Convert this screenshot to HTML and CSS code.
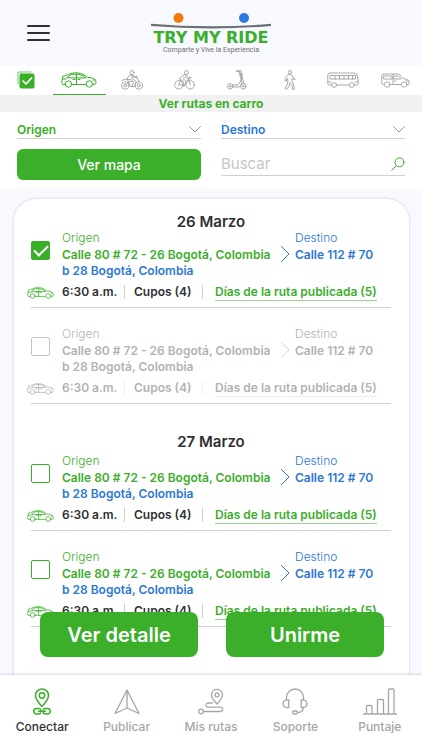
FILE: index.html
```html
<!DOCTYPE html>
<html lang="es">
<head>
<meta charset="utf-8">
<meta name="viewport" content="width=device-width, initial-scale=1">
<title>Try My Ride</title>
<link rel="stylesheet" href="styles.css">
</head>
<body>
<svg class="sprite" aria-hidden="true">
  <symbol id="car" viewBox="0 0 36 16">
    <path d="M4 12.5H1.5Q.8 12 .9 10.500V8.500Q1 7 2 6L1.300 4.500Q5 3.500 7.500 2.300Q10.500 .8 15 .8Q20 .8 23 2.800L26.500 5.300Q31 5.500 33.500 7Q35 8 35 10.500Q35 12.300 33.500 12.500H32M11 12.500H24.500M6 5.500Q8 3 11 2.400Q18 1.300 22 3.700L24.500 5.700ZM15.500 2V12.500M1.500 7H5M12 7.500H14M17 7.500H19M32 8H34"/>
    <circle cx="7.500" cy="12" r="3.200"/><circle cx="28.300" cy="12" r="3.200"/>
  </symbol>
</svg>
<div class="app">
  <header class="header">
    <button class="menu" aria-label="Menú"><span></span><span></span><span></span></button>
    <div class="logo">
      <svg class="logo-mark" viewBox="0 0 120 17" aria-hidden="true">
        <circle cx="27.500" cy="5" r="5" fill="#f07a08"/><circle cx="93" cy="5" r="5" fill="#2c7be0"/>
        <path d="M0 10.800Q60 15.800 120 10.800V13Q60 17.800 0 13Z" fill="#6d6e72"/>
      </svg>
      <strong class="logo-name">TRY MY RIDE</strong>
      <span class="logo-tag">Comparte y Vive la Experiencia</span>
    </div>
  </header>

  <nav class="modes" aria-label="Medio de transporte">
    <button class="mode mode-on" aria-label="Todos"><svg width="18" height="18" viewBox="0 0 18 18"><path d="M1 13V1H14" stroke-width=".7"/><rect x="3" y="3" width="14" height="14" rx="1" fill="#3bae2a"/><path d="M6 10L9 13L14.500 7" stroke="#fff" stroke-width="1.700"/></svg></button>
    <button class="mode mode-on mode-current" aria-label="Carro"><svg width="36" height="16"><use href="#car"/></svg></button>
    <button class="mode" aria-label="Moto"><svg width="22" height="20" viewBox="0 0 22 20"><circle cx="4.200" cy="15.500" r="3.700"/><circle cx="4.200" cy="15.500" r="1.500"/><circle cx="17.800" cy="15.500" r="3.700"/><circle cx="17.800" cy="15.500" r="1.500"/><circle cx="11" cy="2.500" r="2"/><path d="M9 5Q6.500 6.500 6 9.500H10L12.500 12L10.500 16.500H13.500L15 11.500L11 8.500V6.500L15.500 8M9 5L12 5.500L16 7M15.500 6L18 12M1 10.500L5 9L8 11.500H11M4 15L8 12L9 16.500H13"/></svg></button>
    <button class="mode" aria-label="Bicicleta"><svg width="21" height="20" viewBox="0 0 21 20"><circle cx="4.800" cy="14.800" r="4.200"/><circle cx="16.200" cy="14.800" r="4.200"/><circle cx="12.500" cy="2.500" r="2"/><path d="M10.500 4.500Q7 6 5.500 9L9.500 11.500L8.500 16H10.500L12 11L9 8.500L11.500 6.500L13.500 9H16.500M10.500 4.500L13 5.500L14.500 7.500H17M4.800 14.800L7 10M9.500 16L14.500 9.500M16.200 14.800L14 8.500M5 15H10"/></svg></button>
    <button class="mode" aria-label="Patineta"><svg width="20" height="20" viewBox="0 0 20 20"><circle cx="3.200" cy="16.300" r="2.700"/><circle cx="3.200" cy="16.300" r=".8"/><circle cx="16.300" cy="16.300" r="2.700"/><circle cx="16.300" cy="16.300" r=".8"/><path d="M5.500 15H10Q12.500 14 13.500 11.500L14 9L12.500 1.500H9.500V.7H14L16 10.500L17 13.500M6 17H12Q14 16 15 12.500L13.800 4M12 3.500H15V5.500H12.500"/></svg></button>
    <button class="mode" aria-label="A pie"><svg width="12" height="20" viewBox="0 0 12 20"><circle cx="6" cy="2.200" r="1.700"/><path d="M4.500 4.500Q2 6 1.300 8.500L1 11H2.200L3.500 8L3.800 11.500L3 15L1 18.500L2.800 19.300L5 16L6 12.500L8 15.500L8.500 19.300H10.200L9.800 15L8 11V8L10.500 9.800L11.300 9L8.500 6.500Q8 4.500 6.500 4.500Z"/></svg></button>
    <button class="mode" aria-label="Bus"><svg width="32" height="16" viewBox="0 0 32 16"><path d="M4.500 13H2Q.8 13 .8 11.500V3Q.8 1 3 1H27Q30 1 30.500 4L31.200 9V11.500Q31.200 13 30 13H27.500M10 13H22M3.500 3.500H28.500V7H3.500ZM8 3.500V7M12.500 3.500V7M17 3.500V7M21.500 3.500V7M25.500 3.500V7M1 10H4M28 10H31"/><circle cx="7.200" cy="13" r="2.400"/><circle cx="24.800" cy="13" r="2.400"/></svg></button>
    <button class="mode" aria-label="Camioneta"><svg width="29" height="15" viewBox="0 0 29 15"><path d="M3.500 11.500H2Q.8 11.500 .8 10V3Q.8 1 3 1H16Q18 1 19.500 2.500L22 5.500Q26.500 6 27.500 7.500Q28.200 8.500 28.200 10.500Q28.200 11.500 27 11.500H26M9 11.500H20.500M3 3H11V6H3ZM13 3H16Q17.500 3 18.500 4L20 6H13ZM12 1V11.500M13.500 8H15M25 8H27.500"/><circle cx="6.200" cy="11.500" r="2.700"/><circle cx="23.200" cy="11.500" r="2.700"/></svg></button>
  </nav>
  <h1 class="banner">Ver rutas en carro</h1>

  <form class="filters">
    <div class="field">
      <select class="pick pick-from" aria-label="Origen"><option>Origen</option></select>
      <svg class="pick-arrow" width="12" height="7" viewBox="0 0 12 7"><path d="M.5 .5L6 6L11.500 .5"/></svg>
    </div>
    <div class="field">
      <select class="pick pick-to" aria-label="Destino"><option>Destino</option></select>
      <svg class="pick-arrow" width="12" height="7" viewBox="0 0 12 7"><path d="M.5 .5L6 6L11.500 .5"/></svg>
    </div>
    <button class="btn map-btn" type="button">Ver mapa</button>
    <div class="field search">
      <input type="search" placeholder="Buscar" aria-label="Buscar">
      <button class="search-btn" type="button" aria-label="Buscar"><svg width="14" height="14" viewBox="0 0 14 14"><circle cx="8.500" cy="5.300" r="4.500"/><path d="M5.200 8.700L.8 13.200"/></svg></button>
    </div>
  </form>

  <main class="content">
    <div class="card">
      <section class="day">
        <h2 class="day-title">26 Marzo</h2>
        <article class="route">
          <input class="check" type="checkbox" aria-label="Elegir ruta 1" checked>
          <span class="label from">Origen</span><span class="label to">Destino</span>
          <span class="addr from">Calle 80 # 72 - 26 Bogotá, Colombia</span>
          <svg class="chev" width="9" height="16" viewBox="0 0 9 16"><path d="M.5 .5L8 8L.5 15.500"/></svg>
          <span class="addr to">Calle 112 # 70</span>
          <span class="rest to">b 28 Bogotá, Colombia</span>
          <svg class="mini-car" width="27" height="12"><use href="#car"/></svg>
          <div class="meta"><span class="time">6:30 a.m.</span><span class="seats">Cupos (4)</span><a href="#dias">Días de la ruta publicada (5)</a></div>
        </article>
        <article class="route route-off">
          <input class="check" type="checkbox" aria-label="Elegir ruta 2">
          <span class="label from">Origen</span><span class="label to">Destino</span>
          <span class="addr from">Calle 80 # 72 - 26 Bogotá, Colombia</span>
          <svg class="chev" width="9" height="16" viewBox="0 0 9 16"><path d="M.5 .5L8 8L.5 15.500"/></svg>
          <span class="addr to">Calle 112 # 70</span>
          <span class="rest to">b 28 Bogotá, Colombia</span>
          <svg class="mini-car" width="27" height="12"><use href="#car"/></svg>
          <div class="meta"><span class="time">6:30 a.m.</span><span class="seats">Cupos (4)</span><a href="#dias">Días de la ruta publicada (5)</a></div>
        </article>
      </section>
      <section class="day">
        <h2 class="day-title">27 Marzo</h2>
        <article class="route">
          <input class="check" type="checkbox" aria-label="Elegir ruta 3">
          <span class="label from">Origen</span><span class="label to">Destino</span>
          <span class="addr from">Calle 80 # 72 - 26 Bogotá, Colombia</span>
          <svg class="chev" width="9" height="16" viewBox="0 0 9 16"><path d="M.5 .5L8 8L.5 15.500"/></svg>
          <span class="addr to">Calle 112 # 70</span>
          <span class="rest to">b 28 Bogotá, Colombia</span>
          <svg class="mini-car" width="27" height="12"><use href="#car"/></svg>
          <div class="meta"><span class="time">6:30 a.m.</span><span class="seats">Cupos (4)</span><a href="#dias">Días de la ruta publicada (5)</a></div>
        </article>
        <article class="route">
          <input class="check" type="checkbox" aria-label="Elegir ruta 4">
          <span class="label from">Origen</span><span class="label to">Destino</span>
          <span class="addr from">Calle 80 # 72 - 26 Bogotá, Colombia</span>
          <svg class="chev" width="9" height="16" viewBox="0 0 9 16"><path d="M.5 .5L8 8L.5 15.500"/></svg>
          <span class="addr to">Calle 112 # 70</span>
          <span class="rest to">b 28 Bogotá, Colombia</span>
          <svg class="mini-car" width="27" height="12"><use href="#car"/></svg>
          <div class="meta"><span class="time">6:30 a.m.</span><span class="seats">Cupos (4)</span><a href="#dias">Días de la ruta publicada (5)</a></div>
        </article>
      </section>
    </div>
    <div class="actions">
      <button class="btn">Ver detalle</button>
      <button class="btn">Unirme</button>
    </div>
  </main>

  <nav class="tabs" aria-label="Principal">
    <a class="tab tab-current" href="#conectar"><svg width="18" height="27" viewBox="0 0 18 27"><path d="M9 18.500Q2.500 11.500 2.500 7.500A6.500 6.500 0 0 1 15.500 7.500Q15.500 11.500 9 18.500Z"/><circle cx="9" cy="7.500" r="2.700"/><path d="M8 22.500Q7.500 20.500 5.500 20.500H3.500A2.700 2.700 0 0 0 3.500 26H5.500Q7 26 7.800 25M10 24Q10.500 26 12.500 26H14.500A2.700 2.700 0 0 0 14.500 20.500H12.500Q11 20.500 10.200 21.500M5.500 23.300H12.500"/></svg>Conectar</a>
    <a class="tab" href="#publicar"><svg width="26" height="27" viewBox="0 0 26 27"><path d="M13 2L25 25.500L13 20L1 25.500ZM13 2V20"/></svg>Publicar</a>
    <a class="tab" href="#rutas"><svg width="26" height="27" viewBox="0 0 26 27"><path d="M19 16Q13.500 10.500 13.500 6.800A5.500 5.500 0 0 1 24.500 6.800Q24.500 10.500 19 16Z"/><circle cx="19" cy="6.800" r="2"/><circle cx="3" cy="23.500" r="2.300"/><path d="M5.500 23.500H23A2.200 2.200 0 0 0 23 19.200H9.500A2.200 2.200 0 0 1 9.500 15H14.500"/></svg>Mis rutas</a>
    <a class="tab" href="#soporte"><svg width="26" height="27" viewBox="0 0 26 27"><path d="M4.500 11V9.500A8.500 8.500 0 0 1 21.500 9.500V11M6.800 12V19.500Q1 20 1 15.700Q1 11.500 6.800 12ZM19.200 12V19.500Q25 20 25 15.700Q25 11.500 19.200 12ZM21.500 19.500Q21 24.500 15.500 24.500"/><rect x="10.500" y="23" width="5" height="3" rx="1.500"/></svg>Soporte</a>
    <a class="tab" href="#puntaje"><svg width="34" height="27" viewBox="0 0 34 27"><path d="M.5 26H33.500M3.500 26V18.500Q3.500 17.500 4.500 17.500H8Q9 17.500 9 18.500V26M14.500 26V12.500Q14.500 11.500 15.500 11.500H19.500Q20.500 11.500 20.500 12.500V26M25.500 26V2Q25.500 1 26.500 1H30Q31 1 31 2V26"/></svg>Puntaje</a>
  </nav>
</div>
</body>
</html>
```
FILE: styles.css
```css
:root {
  --green: #3bae2a;
  --blue: #2c78d4;
  --ink: #2f2f33;
  --muted: #b2b2b4;
  --line: #cfcfd2;
  --wash: #f8f9ff;
}
* { box-sizing: border-box; }
body {
  margin: 0;
  font-family: Inter, "Liberation Sans", sans-serif;
  color: var(--ink);
  background: var(--wash);
}
button, input, select { margin: 0; padding: 0; border: 0; border-radius: 0; background: none; font: inherit; color: inherit; }
svg { fill: none; stroke: currentColor; stroke-linejoin: round; stroke-linecap: round; }
.sprite { position: absolute; width: 0; height: 0; }
.app { display: flex; flex-direction: column; height: 100vh; }

.header {
  display: grid;
  grid-template-columns: 1fr auto 1fr;
  align-items: center;
  height: 66px;
  padding: 0 27px;
  flex: none;
}
.menu { display: flex; flex-direction: column; gap: 5px; width: 23px; }
.menu span { height: 2px; border-radius: 1px; background: var(--ink); }
.logo { display: flex; flex-direction: column; align-items: center; }
.logo-mark { width: 120px; height: 17px; stroke: none; }
.logo-name { font: bold 16px/16px "DejaVu Sans", sans-serif; color: var(--green); }
.logo-tag { font: 7px/8px Roboto, sans-serif; color: #6d6e72; }

.modes { display: grid; grid-template-columns: repeat(8, 1fr); height: 29px; background: #fff; flex: none; }
.mode { display: flex; align-items: center; justify-content: center; color: #a9a9a9; border-bottom: 1px solid transparent; }
.mode-on { color: var(--green); }
.mode-current { border-color: var(--green); }
.banner { margin: 0; background: #f1f1f1; color: var(--green); font-size: 12px; line-height: 17px; font-weight: 700; text-align: center; flex: none; }

.filters {
  display: grid;
  grid-template-columns: repeat(2, minmax(0, 1fr));
  gap: 10px 20px;
  padding: 8px 17px 9px;
  background: #fff;
  flex: none;
}
.field { position: relative; display: flex; border-bottom: 1px solid var(--line); }
.pick { appearance: none; width: 100%; height: 18px; font-size: 12px; font-weight: 600; }
.pick-from { color: var(--green); }
.pick-to { color: var(--blue); }
.pick-arrow { position: absolute; right: 0; top: 6px; color: #999; pointer-events: none; }
.btn { background: var(--green); color: #fff; border-radius: 6px; font-weight: 500; }
.map-btn { height: 31px; font-size: 14px; }
.search { align-self: start; height: 27px; align-items: center; padding-top: 3px; }
.search input { flex: 1; min-width: 0; font-size: 15px; outline: none; }
.search input::placeholder { color: #c6c6c8; opacity: 1; }
.search-btn { display: flex; color: var(--green); }

.content { position: relative; flex: 1; min-height: 0; overflow: hidden; padding: 10px 13px 0 14px; }
.card {
  height: 100%;
  min-height: 500px;
  padding: 16px 18px 80px 17px;
  background: #fff;
  border-radius: 22px 22px 0 0;
  box-shadow: 0 0 3px rgba(60, 60, 100, .25);
}
.day-title { margin: 0; font-size: 15px; line-height: 14px; font-weight: 600; text-align: center; }
.day + .day { padding-top: 31px; }
.day + .day .day-title { margin-bottom: 3px; }
.route {
  display: grid;
  grid-template-columns: 31px 219px 14px 1fr;
  grid-template-rows: 17px 16px 17px 28px;
  padding-top: 17px;
  border-bottom: 1px solid var(--line);
  font-size: 12px;
  line-height: 17px;
  font-weight: 600;
  white-space: nowrap;
}
.day-title + .route { padding-top: 0; }
.check {
  appearance: none;
  grid-area: 1 / 1 / 4 / 2;
  width: 19px;
  height: 19px;
  margin-top: 12px;
  border: 1px solid var(--green);
  border-radius: 2px;
}
.check:checked {
  display: flex;
  align-items: center;
  justify-content: center;
  background: var(--green);
}
.check:checked::after {
  content: "";
  width: 12px;
  height: 6px;
  margin-bottom: 4px;
  border: solid #fff;
  border-width: 0 0 2px 2px;
  transform: rotate(-45deg);
}
.from { color: var(--green); }
.to { color: var(--blue); }
.label { font-weight: 300; grid-row: 1; }
.addr { grid-row: 2; }
.label.from, .addr.from { grid-column: 2; }
.label.to, .addr.to { grid-column: 4; }
.chev { grid-area: 2 / 3; color: var(--blue); }
.rest { grid-area: 3 / 2 / 4 / 5; }
.mini-car { grid-area: 4 / 1; margin: 8px 0 0 -4px; color: var(--green); }
.meta { grid-area: 4 / 2 / 5 / 5; display: flex; align-items: flex-start; padding-top: 5px; }
.meta span { border-right: 1px solid var(--line); line-height: 14px; margin: 1px 0; }
.time { width: 63px; }
.seats { width: 78px; padding-left: 9px; }
.meta a { margin-left: 12px; line-height: 16px; color: var(--green); text-decoration: none; border-bottom: 1px solid #9bd492; }
.route-off, .route-off .from, .route-off .to, .route-off .mini-car, .route-off .meta a { color: var(--muted); }
.route-off .chev { color: #d5d5d7; }
.route-off .check { border-color: #c4c4c6; }
.route-off .meta span, .route-off .meta a { border-color: #eee; }

.actions { position: absolute; left: 40px; right: 38px; bottom: 18px; display: grid; grid-template-columns: 1fr 1fr; gap: 28px; }
.actions .btn { height: 45px; border-radius: 8px; font-size: 20px; font-weight: 600; }

.tabs {
  position: relative;
  display: grid;
  grid-template-columns: repeat(5, 1fr);
  height: 75px;
  padding-top: 13px;
  background: #fff;
  box-shadow: 0 0 3px rgba(60, 60, 100, .35);
  flex: none;
}
.tab { display: flex; flex-direction: column; align-items: center; gap: 4px; font-size: 12px; line-height: 16px; font-weight: 500; color: #a6a6a8; text-decoration: none; }
.tab svg { stroke-width: 1.3; }
.tab-current { color: var(--ink); }
.tab-current svg { color: var(--green); stroke-width: 1.5; }
```
